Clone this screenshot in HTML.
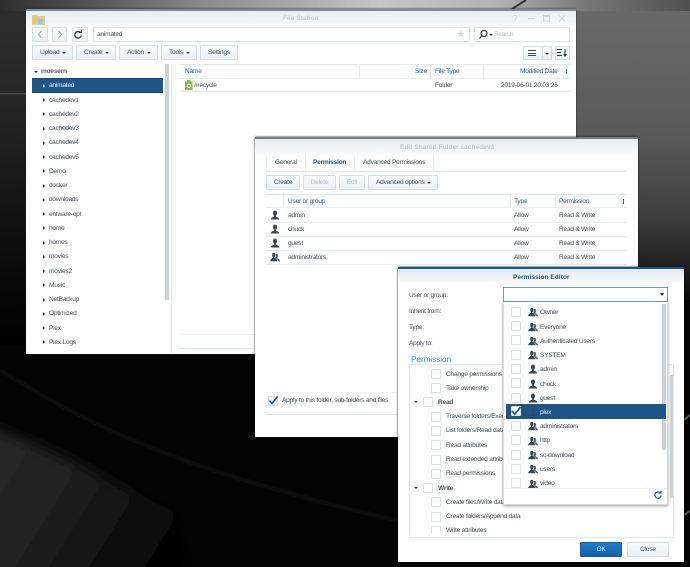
<!DOCTYPE html>
<html><head><meta charset="utf-8"><style>
html,body{margin:0;padding:0;background:#000;width:690px;height:567px;overflow:hidden}
#p{position:relative;width:690px;height:567px;overflow:hidden;font-family:"Liberation Sans",sans-serif;font-size:6.6px;letter-spacing:-.24px;color:#47505a;filter:blur(.33px)}
#p div,#p span,#p svg.a{position:absolute}
.t{white-space:nowrap;line-height:10px;height:10px;margin-top:1px}
.b{box-sizing:border-box;border:1px solid #d3dee8;border-radius:1.5px;background:linear-gradient(#f8fafc,#e9eff4);text-align:center;line-height:14px;color:#47505a;white-space:nowrap}
.h{color:#2a5e93}
.c{box-sizing:border-box;width:10px;height:10px;border:1px solid #d8dfe5;border-radius:1px;background:#fff}
.ln{height:1px;background:#e9eef2}
.v{width:1px;background:#e6edf3}
.ar{width:0;height:0;margin-top:.5px;border-left:2.5px solid #333;border-top:2px solid transparent;border-bottom:2px solid transparent}
.dn{width:0;height:0;border-top:2px solid #444;border-left:2px solid transparent;border-right:2px solid transparent}
.in{box-sizing:border-box;background:#fff;border:1px solid #dbe4ec;border-radius:1px}
</style></head><body><div id="p">
<svg class="a" style="left:0;top:0" width="690" height="567" viewBox="0 0 690 567">
<defs>
<linearGradient id="top" x1="0" x2="1" y1="0" y2="0"><stop offset="0" stop-color="#2e2e2e"/><stop offset=".12" stop-color="#505050"/><stop offset=".3" stop-color="#8c8c8c"/><stop offset=".55" stop-color="#c6c6c6"/><stop offset=".72" stop-color="#b4b4b4"/><stop offset=".85" stop-color="#777"/><stop offset="1" stop-color="#505050"/></linearGradient>
<linearGradient id="left" x1="0" x2="0" y1="0" y2="1"><stop offset="0" stop-color="#2e2e2e"/><stop offset=".3" stop-color="#262626"/><stop offset=".7" stop-color="#0e0e0e"/><stop offset="1" stop-color="#000"/></linearGradient>
<linearGradient id="right" x1="0" x2="0" y1="0" y2="1"><stop offset="0" stop-color="#6a6a6a"/><stop offset=".45" stop-color="#5a5a5a"/><stop offset=".72" stop-color="#3e3e3e"/><stop offset="1" stop-color="#0a0a0a"/></linearGradient>
<linearGradient id="gg" x1="0" x2="1" y1="0" y2=".5"><stop offset="0" stop-color="#2a2a2a"/><stop offset=".5" stop-color="#1f1f1f"/><stop offset="1" stop-color="#050505"/></linearGradient>
<filter id="bl" x="-30%" y="-30%" width="160%" height="160%"><feGaussianBlur stdDeviation="7"/></filter>
<filter id="bs" x="-5%" y="-20%" width="110%" height="140%"><feGaussianBlur stdDeviation="1.500"/></filter>
</defs>
<rect width="690" height="567" fill="#030303"/>
<rect x="570" y="0" width="120" height="300" fill="url(#right)"/>
<rect x="0" y="0" width="27" height="345" fill="url(#left)"/>
<rect x="0" y="93" width="27" height="1.500" fill="#444"/>
<path d="M-20 424C60 450 110 482 175 512L190 590L-20 590Z" fill="url(#gg)" filter="url(#bl)"/>
<path d="M0 370C110 440 220 480 400 521" stroke="#1a1a1a" stroke-width="2" fill="none" filter="url(#bs)"/>
<rect y="0" width="690" height="11" fill="url(#top)"/>
<path d="M512 9 L526 0" stroke="#333" stroke-width="2" fill="none"/>
<path d="M684 420 L690 415 M684 515 L690 511" stroke="#555" stroke-width="2" fill="none"/>
<symbol id="u" viewBox="0 0 10 10"><path d="M5 .5C3.600 .5 3 1.600 3 3c0 1.200.5 2.200 1.100 2.700v.9C3 7.200 1 7.500.8 9.500h8.400C9 7.500 7 7.200 5.900 6.600v-.9C6.500 5.200 7 4.200 7 3 7 1.600 6.400.5 5 .5z" fill="#3a4650"/></symbol>
<symbol id="g" viewBox="0 0 10 10"><path d="M3.800.8C2.700.8 2.200 1.700 2.200 2.900c0 1 .4 1.800.9 2.200v.8C2.200 6.400.4 6.800.2 9.300h7.200C7.200 6.800 5.400 6.400 4.500 5.900v-.8c.5-.4.9-1.200.9-2.200C5.400 1.700 4.900.8 3.800.8z" fill="#3a4650"/><path d="M6.500 2c-.4 0-.7.1-.9.400.3.700.3 1.700 0 2.500l-.3.700v.5c1 .5 2.400 1 2.700 3.200h2C9.800 7.300 8.400 6.800 7.500 6.300v-.8c.4-.4.700-1 .7-1.800C8.200 2.600 7.500 2 6.500 2z" fill="#56626c"/></symbol>
</svg>

<!-- FILE STATION -->
<div style="left:26px;top:9px;width:550px;height:345px;background:#fff;box-shadow:0 0 2px #222"></div>
<div style="left:26px;top:9px;width:550px;height:2px;background:#7e8b96"></div>
<div style="left:26px;top:11px;width:550px;height:50px;background:linear-gradient(#e6edf2,#fff 45%)"></div>
<svg class="a" style="left:32px;top:13px" width="13" height="12" viewBox="0 0 13 12"><path d="M0 2h5l1 1h7v9H0z" fill="#eac67e"/><rect x="6" y="6" width="5" height="5" fill="#9cc7e5"/></svg>
<div class="t" style="left:283px;top:13px;font-weight:bold;letter-spacing:0;color:#c2c9cf">File Station</div>
<svg class="a" style="left:510px;top:14px" width="60" height="9" viewBox="0 0 60 9" fill="none" stroke="#cfd6db" stroke-width="1"><path d="M3 2.500C3 1 7 1 7 3c0 1.500-2 1.500-2 3M5 7v1"/><path d="M18 4.500h7"/><rect x="33.500" y="1.500" width="6" height="5.500"/><path d="M34 2.500h5"/><path d="M49 1.500l6 6M55 1.500l-6 6"/></svg>

<div class="b" style="left:32px;top:27px;width:16px;height:15px"></div>
<div class="b" style="left:52px;top:27px;width:15px;height:15px"></div>
<div class="b" style="left:72px;top:27px;width:16px;height:15px"></div>
<svg class="a" style="left:32px;top:27px" width="56" height="15" viewBox="0 0 56 15" fill="none" stroke="#98a3ac" stroke-width="1"><path d="M9.500 4l-3 3.500 3 3.500M26.500 4l3 3.500-3 3.500"/><path d="M48.500 5.500a3.300 3.300 0 1 0 .8 3" stroke="#333" stroke-width="1.300"/><path d="M46.500 5.500h3v-2.500" stroke="#333"/></svg>
<div class="in" style="left:93px;top:27px;width:377px;height:15px"></div>
<div class="t" style="left:97px;top:29px">animated</div>
<div class="t" style="left:457px;top:28px;font-size:9px;color:#c9d3db">★</div>
<div class="in" style="left:474px;top:27px;width:96px;height:15px"></div>
<svg class="a" style="left:478px;top:29px" width="12" height="11" viewBox="0 0 12 11" fill="none" stroke="#222" stroke-width="1.100"><circle cx="6" cy="4.500" r="3"/><path d="M3.800 6.800L1.500 9.500"/></svg>
<div class="dn" style="left:489px;top:34px"></div>
<div class="t" style="left:494px;top:29px;color:#b8c0c7">Search</div>

<div class="b" style="left:32px;top:45px;width:41px;height:15px;text-align:left;padding-left:7px">Upload</div><div class="dn" style="left:62px;top:52px"></div>
<div class="b" style="left:76px;top:45px;width:40px;height:15px;text-align:left;padding-left:7px">Create</div><div class="dn" style="left:105px;top:52px"></div>
<div class="b" style="left:119px;top:45px;width:39px;height:15px;text-align:left;padding-left:7px">Action</div><div class="dn" style="left:147px;top:52px"></div>
<div class="b" style="left:161px;top:45px;width:36px;height:15px;text-align:left;padding-left:7px">Tools</div><div class="dn" style="left:186px;top:52px"></div>
<div class="b" style="left:200px;top:45px;width:38px;height:15px">Settings</div>
<div class="b" style="left:523px;top:46px;width:29px;height:14px"></div>
<div class="v" style="left:542px;top:47px;height:12px;background:#d3dee8"></div>
<div style="left:528px;top:50px;width:8px;height:6px;border-top:1px solid #444;border-bottom:1px solid #444;box-sizing:border-box"></div>
<div style="left:528px;top:52.500px;width:8px;height:1px;background:#444"></div>
<div class="dn" style="left:545px;top:53px"></div>
<div class="b" style="left:555px;top:46px;width:15px;height:14px"></div>
<svg class="a" style="left:557px;top:48px" width="11" height="10" viewBox="0 0 11 10" stroke="#333" fill="none"><path d="M0 1.500h5M0 4.500h4M0 7.500h5M8 1v6"/><path d="M6 6l2 3 2-3z" fill="#333" stroke="none"/></svg>

<!-- sidebar -->
<div class="dn" style="left:34px;top:70.500px;border-top-width:2.500px;border-left-width:2.500px;border-right-width:2.500px"></div>
<div class="t" style="left:41px;top:66px;font-weight:bold;color:#5a646d">moesern</div>
<div style="left:32px;top:78px;width:131px;height:14.500px;background:#1d5587;border-top:1px solid #164570;border-bottom:1px solid #164570;box-sizing:border-box"></div>
<div class="ar" style="left:43px;top:83px;border-left-color:#fff"></div>
<div class="t" style="left:49px;top:80px;color:#e8eff5">animated</div>
<div class="ar" style="left:43px;top:97.500px"></div><div class="t" style="left:49px;top:94.500px">cachedev1</div>
<div class="ar" style="left:43px;top:111.700px"></div><div class="t" style="left:49px;top:108.700px">cachedev2</div>
<div class="ar" style="left:43px;top:126px"></div><div class="t" style="left:49px;top:123px">cachedev3</div>
<div class="ar" style="left:43px;top:140.200px"></div><div class="t" style="left:49px;top:137.200px">cachedev4</div>
<div class="ar" style="left:43px;top:154.500px"></div><div class="t" style="left:49px;top:151.500px">cachedev5</div>
<div class="ar" style="left:43px;top:168.700px"></div><div class="t" style="left:49px;top:165.700px">Demo</div>
<div class="ar" style="left:43px;top:183px"></div><div class="t" style="left:49px;top:180px">docker</div>
<div class="ar" style="left:43px;top:197.200px"></div><div class="t" style="left:49px;top:194.200px">downloads</div>
<div class="ar" style="left:43px;top:211.500px"></div><div class="t" style="left:49px;top:208.500px">entware-opt</div>
<div class="ar" style="left:43px;top:225.700px"></div><div class="t" style="left:49px;top:222.700px">home</div>
<div class="ar" style="left:43px;top:240px"></div><div class="t" style="left:49px;top:237px">homes</div>
<div class="ar" style="left:43px;top:254.200px"></div><div class="t" style="left:49px;top:251.200px">movies</div>
<div class="ar" style="left:43px;top:268.500px"></div><div class="t" style="left:49px;top:265.500px">movies2</div>
<div class="ar" style="left:43px;top:282.700px"></div><div class="t" style="left:49px;top:279.700px">Music</div>
<div class="ar" style="left:43px;top:297px"></div><div class="t" style="left:49px;top:294px">NetBackup</div>
<div class="ar" style="left:43px;top:311.200px"></div><div class="t" style="left:49px;top:308.200px">Optimized</div>
<div class="ar" style="left:43px;top:325.500px"></div><div class="t" style="left:49px;top:322.500px">Plex</div>
<div class="ar" style="left:43px;top:339.700px"></div><div class="t" style="left:49px;top:336.700px">Plex Logs</div>
<div style="left:165px;top:64px;width:4px;height:236px;background:#cdd2d7"></div>
<div style="left:171px;top:64px;width:1px;height:289px;background:#e4e7ea"></div>

<!-- file grid -->
<div style="left:180px;top:64px;width:391px;height:1px;background:#e3ebf2"></div>
<div class="ln" style="left:180px;top:78px;width:391px"></div>
<div class="ln" style="left:180px;top:91px;width:391px"></div>
<div class="v" style="left:359px;top:65px;height:13px"></div>
<div class="v" style="left:430px;top:65px;height:13px"></div>
<div class="v" style="left:483px;top:65px;height:13px"></div>
<div class="v" style="left:563px;top:65px;height:13px"></div>
<div class="t h" style="left:185px;top:66px">Name</div>
<div class="t h" style="left:415px;top:66px">Size</div>
<div class="t h" style="left:435px;top:66px">File Type</div>
<div class="t h" style="left:520px;top:66px">Modified Date</div>
<div style="left:566px;top:69px;width:1px;height:5px;background:#2f6397"></div>
<svg class="a" style="left:185px;top:80px" width="8" height="10" viewBox="0 0 8 10"><rect y="1.500" width="7.500" height="8.500" fill="#82bd45"/><rect x="2" y="0" width="3.500" height="2" fill="#82bd45"/><circle cx="3.800" cy="5.800" r="1.700" fill="none" stroke="#eef6e2"/></svg>
<div class="t" style="left:194px;top:80px">#recycle</div>
<div class="t" style="left:435px;top:80px">Folder</div>
<div class="t" style="left:501px;top:80px">2019-06-01 20:03:26</div>
<div class="ln" style="left:180px;top:334px;width:375px;background:#f0f3f5"></div>
<div class="ln" style="left:180px;top:348px;width:375px;background:#e3ebf2"></div>

<!-- EDIT SHARED FOLDER -->
<div style="left:255px;top:137px;width:383px;height:300px;background:#fff;box-shadow:0 0 2px #111"></div>
<div style="left:255px;top:137px;width:383px;height:2px;background:#6f7a83"></div>
<div style="left:255px;top:139px;width:383px;height:18px;background:linear-gradient(#e4ebf0,#fff)"></div>
<div class="t" style="left:400px;top:142px;font-weight:bold;letter-spacing:0;color:#c0c7cd">Edit Shared Folder cachedev3</div>
<div class="v" style="left:266px;top:156px;height:15px"></div>
<div class="v" style="left:305px;top:156px;height:15px"></div>
<div class="v" style="left:354px;top:156px;height:15px"></div>
<div class="v" style="left:433px;top:156px;height:15px"></div>
<div class="t" style="left:275px;top:156.500px">General</div>
<div class="t" style="left:313px;top:156.500px;font-weight:bold;color:#1f5587">Permission</div>
<div class="t" style="left:363px;top:156.500px">Advanced Permissions</div>
<div style="left:266px;top:171px;width:360px;height:1px;background:#e2e6ea"></div>
<div style="left:328px;top:169.500px;width:3.500px;height:3.500px;background:#fff;border-left:1px solid #e2e6ea;border-top:1px solid #e2e6ea;transform:rotate(45deg)"></div>
<div class="b" style="left:266px;top:175px;width:34px;height:15px">Create</div>
<div class="b" style="left:303px;top:175px;width:33px;height:15px;color:#b6bdc3">Delete</div>
<div class="b" style="left:339px;top:175px;width:26px;height:15px;color:#b6bdc3">Edit</div>
<div class="b" style="left:368px;top:175px;width:70px;height:15px;text-align:left;padding-left:7px">Advanced options</div><div class="dn" style="left:427px;top:182px"></div>
<div style="left:266px;top:194px;width:361px;height:1px;background:#e3ebf2"></div>
<div class="v" style="left:283px;top:195px;height:12px"></div>
<div class="v" style="left:510px;top:195px;height:12px"></div>
<div class="v" style="left:555px;top:195px;height:12px"></div>
<div class="v" style="left:618px;top:195px;height:12px"></div>
<div class="t h" style="left:288px;top:196px">User or group</div>
<div class="t h" style="left:514px;top:196px">Type</div>
<div class="t h" style="left:559px;top:196px">Permission</div>
<div style="left:623px;top:198.500px;width:1px;height:5px;background:#2f6397"></div>
<div class="ln" style="left:266px;top:207px;width:361px"></div>
<div class="ln" style="left:266px;top:222px;width:361px"></div>
<div class="ln" style="left:266px;top:236px;width:361px"></div>
<div class="ln" style="left:266px;top:250px;width:361px"></div>
<div class="ln" style="left:266px;top:264px;width:361px"></div>
<svg class="a" style="left:270px;top:210px" width="10" height="10"><use href="#u"/></svg>
<svg class="a" style="left:270px;top:224px" width="10" height="10"><use href="#u"/></svg>
<svg class="a" style="left:270px;top:238px" width="10" height="10"><use href="#u"/></svg>
<svg class="a" style="left:270px;top:252px" width="10" height="10"><use href="#g"/></svg>
<div class="t" style="left:288px;top:210px">admin</div><div class="t" style="left:514px;top:210px">Allow</div><div class="t" style="left:559px;top:210px">Read &amp; Write</div>
<div class="t" style="left:288px;top:224px">chuck</div><div class="t" style="left:514px;top:224px">Allow</div><div class="t" style="left:559px;top:224px">Read &amp; Write</div>
<div class="t" style="left:288px;top:238px">guest</div><div class="t" style="left:514px;top:238px">Allow</div><div class="t" style="left:559px;top:238px">Read &amp; Write</div>
<div class="t" style="left:288px;top:252px">administrators</div><div class="t" style="left:514px;top:252px">Allow</div><div class="t" style="left:559px;top:252px">Read &amp; Write</div>
<div class="ln" style="left:266px;top:392px;width:130px;background:#f2f4f6"></div>
<div class="c" style="left:268px;top:396px;background:#eef2f5"></div>
<svg class="a" style="left:268px;top:395px" width="11" height="11" viewBox="0 0 11 11" fill="none" stroke="#1d4f80" stroke-width="1.500"><path d="M1.500 5.500l2.500 3 5.500-7"/></svg>
<div class="t" style="left:282px;top:395px">Apply to this folder, sub-folders and files</div>
<div class="ln" style="left:266px;top:414px;width:132px;background:#e3e6e9"></div>

<!-- PERMISSION EDITOR -->
<div style="left:398px;top:267px;width:286px;height:295px;background:#fff;box-shadow:0 0 2px #000"></div>
<div style="left:398px;top:267px;width:286px;height:2px;background:#1d5587"></div>
<div style="left:398px;top:269px;width:286px;height:18px;background:linear-gradient(#e2eaf0,#fff)"></div>
<div class="t" style="left:513px;top:272px;font-weight:bold;letter-spacing:0;color:#1f5587">Permission Editor</div>
<div class="t" style="left:409px;top:289.500px">User or group:</div>
<div class="t" style="left:409px;top:305.500px">Inherit from:</div>
<div class="t" style="left:409px;top:321.500px">Type:</div>
<div class="t" style="left:409px;top:338px">Apply to:</div>
<div class="t" style="left:411px;top:352.500px;font-size:8.300px;letter-spacing:-.1px;color:#2a93e0">Permission</div>

<div style="left:409px;top:364px;width:265px;height:170px;box-sizing:border-box;border:1px solid #e3ebf2;border-bottom:0;overflow:hidden;background:#fff"></div>
<div class="c" style="left:431px;top:369px"></div><div class="t" style="left:446px;top:368.500px">Change permissions</div>
<div class="c" style="left:431px;top:383px"></div><div class="t" style="left:446px;top:382.500px">Take ownership</div>
<div class="dn" style="left:414px;top:401px"></div><div class="c" style="left:423px;top:397px"></div><div class="t" style="left:438px;top:397px;font-weight:bold">Read</div>
<div class="c" style="left:431px;top:411.500px"></div><div class="t" style="left:446px;top:411px">Traverse folders/Execute files</div>
<div class="c" style="left:431px;top:426px"></div><div class="t" style="left:446px;top:425px">List folders/Read data</div>
<div class="c" style="left:431px;top:440px"></div><div class="t" style="left:446px;top:440px">Read attributes</div>
<div class="c" style="left:431px;top:454.500px"></div><div class="t" style="left:446px;top:454px">Read extended attributes</div>
<div class="c" style="left:431px;top:468.500px"></div><div class="t" style="left:446px;top:468px">Read permissions</div>
<div class="dn" style="left:414px;top:486.500px"></div><div class="c" style="left:423px;top:483px"></div><div class="t" style="left:438px;top:482.500px;font-weight:bold">Write</div>
<div class="c" style="left:431px;top:497px"></div><div class="t" style="left:446px;top:497px">Create files/Write data</div>
<div class="c" style="left:431px;top:511.500px"></div><div class="t" style="left:446px;top:511px">Create folders/Append data</div>
<div class="c" style="left:431px;top:525.500px"></div><div class="t" style="left:446px;top:525px">Write attributes</div>
<div style="left:410px;top:533px;width:263px;height:4px;background:#fff"></div>
<div style="left:409px;top:537px;width:265px;height:1px;background:#e3e6e9"></div>
<div style="left:670px;top:375px;width:3px;height:123px;background:#cdd2d7"></div>
<div class="b" style="left:580px;top:542px;width:42px;height:15px;background:linear-gradient(#1f7cc4,#0f62a8);border-color:#0f5fa3;color:#cfe2f2">OK</div>
<div class="b" style="left:627px;top:542px;width:42px;height:15px">Close</div>

<!-- combo + dropdown -->
<div style="left:503px;top:287px;width:165px;height:15px;box-sizing:border-box;border:1px solid #6f9bc0;background:#fff"></div>
<div class="dn" style="left:660px;top:293px;border-top:3px solid #333;border-left-width:2.500px;border-right-width:2.500px"></div>
<div style="left:503px;top:302px;width:165px;height:203px;box-sizing:border-box;background:#fff;border:1px solid #d5d9dd;border-top:0;box-shadow:0 1px 3px rgba(0,0,0,.4)"></div>
<div style="left:662px;top:304px;width:4px;height:146px;background:#cdd2d7"></div>
<div style="left:506px;top:404px;width:160px;height:14.500px;background:#1d5587"></div>

<div class="c" style="left:511px;top:307px"></div><svg class="a" style="left:528px;top:307px" width="10" height="10"><use href="#g"/></svg><div class="t" style="left:540px;top:307px">Owner</div>
<div class="c" style="left:511px;top:321px"></div><svg class="a" style="left:528px;top:321.500px" width="10" height="10"><use href="#g"/></svg><div class="t" style="left:540px;top:321.500px">Everyone</div>
<div class="c" style="left:511px;top:335px"></div><svg class="a" style="left:528px;top:335.500px" width="10" height="10"><use href="#g"/></svg><div class="t" style="left:540px;top:335.500px">Authenticated Users</div>
<div class="c" style="left:511px;top:349.500px"></div><svg class="a" style="left:528px;top:350px" width="10" height="10"><use href="#g"/></svg><div class="t" style="left:540px;top:350px">SYSTEM</div>
<div class="c" style="left:511px;top:364px"></div><svg class="a" style="left:528px;top:364px" width="10" height="10"><use href="#u"/></svg><div class="t" style="left:540px;top:364px">admin</div>
<div class="c" style="left:511px;top:378px"></div><svg class="a" style="left:528px;top:378.500px" width="10" height="10"><use href="#u"/></svg><div class="t" style="left:540px;top:378.500px">chuck</div>
<div class="c" style="left:511px;top:392.500px"></div><svg class="a" style="left:528px;top:393px" width="10" height="10"><use href="#u"/></svg><div class="t" style="left:540px;top:392.500px">guest</div>
<div class="c" style="left:511px;top:406px"></div><svg class="a" style="left:510px;top:405px" width="12" height="12" viewBox="0 0 12 12" fill="none" stroke="#1d4f80" stroke-width="1.600"><path d="M2 6l2.800 3.200L10.500 2"/></svg><svg class="a" style="left:528px;top:407px;opacity:.6" width="10" height="10"><use href="#u"/></svg><div class="t" style="left:540px;top:406.500px;color:#dfe9f1">plex</div>
<div class="c" style="left:511px;top:421px"></div><svg class="a" style="left:528px;top:421px" width="10" height="10"><use href="#g"/></svg><div class="t" style="left:540px;top:421px">administrators</div>
<div class="c" style="left:511px;top:435px"></div><svg class="a" style="left:528px;top:435.500px" width="10" height="10"><use href="#g"/></svg><div class="t" style="left:540px;top:435px">http</div>
<div class="c" style="left:511px;top:449.500px"></div><svg class="a" style="left:528px;top:450px" width="10" height="10"><use href="#g"/></svg><div class="t" style="left:540px;top:449.500px">sc-download</div>
<div class="c" style="left:511px;top:463.500px"></div><svg class="a" style="left:528px;top:464px" width="10" height="10"><use href="#g"/></svg><div class="t" style="left:540px;top:463.500px">users</div>
<div class="c" style="left:511px;top:478px"></div><svg class="a" style="left:528px;top:478.500px" width="10" height="10"><use href="#g"/></svg><div class="t" style="left:540px;top:478px">video</div>
<div style="left:504px;top:488px;width:163px;height:16px;background:#fff;border-top:1px solid #eef1f3;box-sizing:border-box"></div>
<div class="v" style="left:649px;top:489px;height:10px"></div>
<svg class="a" style="left:653px;top:490px" width="10" height="10" viewBox="0 0 10 10" fill="none" stroke="#1d5f97" stroke-width="1.200"><path d="M7.500 3a3.200 3.200 0 1 0 .7 2.500"/><path d="M5.800 3h2.200V.8"/></svg>
</div></body></html>
